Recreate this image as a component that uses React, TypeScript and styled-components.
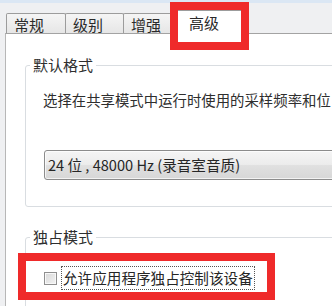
import React from "react";
import styled, { createGlobalStyle } from "styled-components";

const Global = createGlobalStyle`
  html, body { margin: 0; padding: 0; }
  body {
    background: #f0f0f2;
    font-family: "Noto Sans CJK SC", "Noto Sans", sans-serif;
    color: #2a2a2a;
  }
`;

const Window = styled.div`
  position: relative;
  width: 332px;
  height: 306px;
  overflow: hidden;
  background: #eff0f2;
  display: flex;
  flex-direction: column;
`;

const TopBand = styled.div`
  height: 3px;
  background: #dbe7f4;
  flex: none;
`;

const TabStrip = styled.div`
  display: flex;
  align-items: flex-end;
  height: 23px;
  margin-top: 7px;
  padding-left: 6px;
  flex: none;
`;

const Tab = styled.div<{ $w: number; $active?: boolean }>`
  position: relative;
  z-index: ${(p) => (p.$active ? 2 : 1)};
  box-sizing: border-box;
  width: ${(p) => p.$w}px;
  height: ${(p) => (p.$active ? 24 : 20)}px;
  margin-left: ${(p) => (p.$active ? -2 : -1)}px;
  margin-bottom: ${(p) => (p.$active ? -1 : 0)}px;
  padding: ${(p) => (p.$active ? "3px 0 0 17px" : "2px 0 0 7px")};
  border: 1px solid #9c9c9c;
  border-bottom: none;
  border-radius: 2px 2px 0 0;
  background: ${(p) =>
    p.$active ? "#ffffff" : "linear-gradient(#f5f5f5, #e6e6e6)"};
  font-size: 15px;
  line-height: 18px;
  white-space: nowrap;
  &:first-child { margin-left: 0; }
`;

const Panel = styled.div`
  flex: 1;
  margin-left: 5px;
  background: #ffffff;
  border-top: 1px solid #a3a3a3;
  border-left: 1px solid #b7b7b7;
  display: flex;
  flex-direction: column;
`;

const Group = styled.fieldset<{ $mt: number }>`
  box-sizing: border-box;
  width: 420px;
  margin: ${(p) => p.$mt}px 0 0 19px;
  padding: 0 0 0 4px;
  border: 1px solid #d9dde1;
  border-radius: 3px;
  min-width: 0;
  flex: none;
`;

const Legend = styled.legend`
  padding: 0 3px;
  font-size: 15px;
  line-height: 20px;
  color: #2e2e2e;
`;

const GroupBody = styled.div<{ $pt: number; $pb: number }>`
  padding: ${(p) => p.$pt}px 0 ${(p) => p.$pb}px 13px;
  display: flex;
  flex-direction: column;
  align-items: flex-start;
`;

const Description = styled.div`
  font-size: 14.4px;
  line-height: 20px;
  white-space: nowrap;
  color: #2e2e2e;
`;

const Select = styled.div`
  box-sizing: border-box;
  width: 320px;
  height: 30px;
  margin: 40px 0 0 1px;
  padding-left: 3px;
  border: 1px solid #8c8c8c;
  border-radius: 3px;
  background: linear-gradient(#f5f5f5 0%, #ececec 48%, #e0e0e0 52%, #d7d7d7 100%);
  box-shadow: inset 0 0 0 1px rgba(255, 255, 255, 0.7);
  font-size: 14.6px;
  line-height: 28px;
  white-space: pre;
  color: #262626;
`;

const CheckRow = styled.label`
  display: flex;
  align-items: center;
  gap: 4px;
  height: 24px;
  padding-left: 1px;
`;

const CheckBox = styled.span`
  box-sizing: border-box;
  width: 13px;
  height: 13px;
  border: 1px solid #8f8f8f;
  background: linear-gradient(135deg, #d8d8d8, #f3f3f3);
  box-shadow: inset 0 0 0 1px #f8f8f8;
  flex: none;
`;

const CheckText = styled.span`
  box-sizing: border-box;
  height: 24px;
  padding: 0 1px;
  border: 1px dotted #555;
  font-size: 14.6px;
  line-height: 22px;
  white-space: nowrap;
  color: #262626;
`;

const Highlight = styled.div<{ $x: number; $y: number; $w: number; $h: number }>`
  position: absolute;
  left: ${(p) => p.$x}px;
  top: ${(p) => p.$y}px;
  width: ${(p) => p.$w}px;
  height: ${(p) => p.$h}px;
  box-sizing: border-box;
  border: 8px solid #ef2a2a;
  z-index: 5;
`;

export default function App() {
  return (
    <>
      <Global />
      <Window>
        <TopBand />
        <TabStrip>
          <Tab $w={60}>常规</Tab>
          <Tab $w={59}>级别</Tab>
          <Tab $w={50}>增强</Tab>
          <Tab $w={72} $active>
            高级
          </Tab>
        </TabStrip>
        <Panel>
          <Group $mt={21}>
            <Legend>默认格式</Legend>
            <GroupBody $pt={15} $pb={26}>
              <Description>选择在共享模式中运行时使用的采样频率和位</Description>
              <Select>24 位 , 48000 Hz (录音室音质)</Select>
            </GroupBody>
          </Group>
          <Group $mt={20}>
            <Legend>独占模式</Legend>
            <GroupBody $pt={19} $pb={40}>
              <CheckRow>
                <CheckBox />
                <CheckText>允许应用程序独占控制该设备</CheckText>
              </CheckRow>
            </GroupBody>
          </Group>
        </Panel>
        <Highlight $x={170} $y={2} $w={79} $h={48} />
        <Highlight $x={18} $y={253} $w={257} $h={47} />
      </Window>
    </>
  );
}
